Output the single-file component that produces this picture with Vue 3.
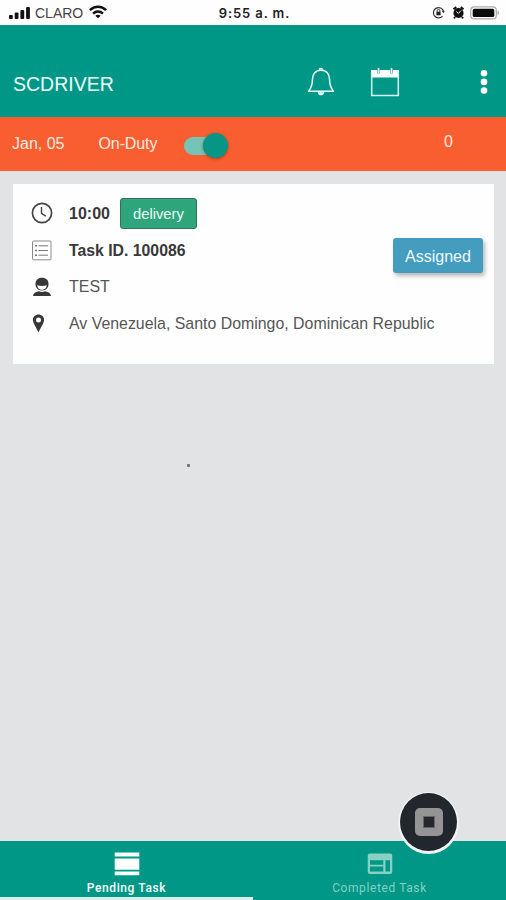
<script setup>
import { ref } from 'vue'

const onDuty = ref(true)
const activeTab = ref('pending')
const task = {
  time: '10:00',
  type: 'delivery',
  id: '100086',
  customer: 'TEST',
  address: 'Av Venezuela, Santo Domingo, Dominican Republic',
  status: 'Assigned',
}
</script>

<template>
  <div class="screen">
    <div class="status">
      <div class="carrier">
        <svg width="22" height="14" viewBox="0 0 22 14" fill="#111">
          <rect x="0" y="9" width="3.8" height="4" rx="1" />
          <rect x="5.7" y="6.5" width="3.8" height="6.5" rx="1" />
          <rect x="11.4" y="4" width="3.8" height="9" rx="1" />
          <rect x="17.1" y="1" width="3.8" height="12" rx="1" />
        </svg>
        <span class="carrier-name">CLARO</span>
        <svg class="wifi" width="18" height="14" viewBox="0 0 18 14" fill="none" stroke="#111" stroke-width="2.5">
          <path d="M.9 5.2C5.4.5 12.6.5 17.1 5.2" />
          <path d="M4.1 8.6c2.8-2.8 7-2.8 9.8 0" />
          <path d="M9 13.2 6.3 10.7c1.6-1.4 3.8-1.4 5.4 0z" fill="#111" stroke="none" />
        </svg>
      </div>
      <span class="clock">9:55 a. m.</span>
      <div class="indicators">
        <svg width="13" height="13" viewBox="0 0 13 13" fill="none" stroke="#333" stroke-width="1.2">
          <path d="M10.5 10.2A5.2 5.2 0 1 1 11.6 5.3" />
          <path d="M9.6 4.7h3.2l-1.3 2.5z" fill="#333" stroke="none" />
          <rect x="4.4" y="5.8" width="4.2" height="3.5" fill="#222" stroke="none" />
          <path d="M5.2 6V4.7a1.3 1.3 0 0 1 2.6 0V6" stroke-width="1" />
        </svg>
        <svg width="13" height="13" viewBox="0 0 13 13">
          <circle cx="6.5" cy="7" r="5.1" fill="#111" />
          <path d="m1.500 3.300 2.800-2.200M11.500 3.300 8.700 1.100M3 11l-1 1.400M10 11l1 1.400" stroke="#111" stroke-width="2" />
          <path d="M6.3 7.4 9 4.6M6.3 7.4 4.4 5.5" stroke="#fff" stroke-width="1" fill="none" />
        </svg>
        <svg width="30" height="14" viewBox="0 0 30 14">
          <rect x=".7" y=".9" width="25.6" height="12" rx="3.5" fill="none" stroke="#aaa" stroke-width="1.2" />
          <rect x="2.7" y="2.8" width="21.6" height="8.2" rx="1.6" fill="#0b0b0b" />
          <path d="M27.5 4.8c2 .7 2 3.5 0 4.2z" fill="#aaa" />
        </svg>
      </div>
    </div>

    <header class="toolbar">
      <h1>SCDRIVER</h1>
      <button class="bell" aria-label="Notifications">
        <svg width="28" height="30" viewBox="0 0 28 30" fill="none" stroke="#e8fffb" stroke-width="1.5" stroke-linejoin="round">
          <path d="M14 3.2c-5.5 0-8.5 4-8.5 9 0 6-1.2 8.5-3.9 12.1h24.8c-2.7-3.6-3.9-6.1-3.9-12.1 0-5-3-9-8.5-9z" />
          <path d="M12.4 3.2a1.6 1.6 0 0 1 3.2 0" />
          <path d="M10.8 25.2h6.400c0 4.200-6.400 4.200-6.400 0z" fill="#e8fffb" stroke="none" />
        </svg>
      </button>
      <button class="calendar" aria-label="Calendar">
        <svg width="30" height="30" viewBox="0 0 30 30">
          <path d="M1 3h28v7.500H1z" fill="#fff" />
          <path d="M1.700 4v24.400h26.600V4" fill="none" stroke="#dcfaf4" stroke-width="1.500" />
          <path d="M8.500 1v5.500M21.500 1v5.500" stroke="#48b3a7" stroke-width="2.600" />
          <path d="M8.500 1v5M21.500 1v5" stroke="#fff" stroke-width="1.200" />
        </svg>
      </button>
      <button class="more" aria-label="More">
        <svg width="8" height="26" viewBox="0 0 8 26" fill="#fff">
          <circle cx="4" cy="4.300" r="3.300" /><circle cx="4" cy="12.900" r="3.300" /><circle cx="4" cy="21.500" r="3.300" />
        </svg>
      </button>
    </header>

    <section class="duty">
      <span class="date">Jan, 05</span>
      <span class="duty-label">On-Duty</span>
      <button class="switch" :class="{ on: onDuty }" aria-label="On-Duty" @click="onDuty = !onDuty">
        <span class="knob"></span>
      </button>
      <span class="count">0</span>
    </section>

    <main class="content">
      <article class="card">
        <div class="details">
          <div class="line">
            <span class="icon">
              <svg width="22" height="22" viewBox="0 0 22 22" fill="none" stroke="#444">
                <circle cx="11" cy="11" r="9.600" stroke-width="1.700" />
                <path d="M10.500 5v6.400l4.300 2.700" stroke-width="1.400" />
              </svg>
            </span>
            <strong class="time">{{ task.time }}</strong>
            <span class="type">{{ task.type }}</span>
          </div>
          <div class="line">
            <span class="icon">
              <svg width="21" height="21" viewBox="0 0 21 21" fill="none" stroke="#8a8a8a">
                <rect x="1.500" y="1" width="18.500" height="18.800" rx="1" />
                <path d="M7.500 5.800h9.500M7.500 10.500h9.500M7.500 15.200h9.500" stroke="#777" />
                <path d="M4 5.800h2M4 10.500h2M4 15.200h2" stroke="#777" stroke-width="1.500" />
              </svg>
            </span>
            <strong class="task-id">Task ID. {{ task.id }}</strong>
          </div>
          <div class="line">
            <span class="icon">
              <svg width="21" height="20" viewBox="-1.500 0 21 20">
                <path d="M3 7.500C3 3 5.300.8 9.500.8S16 3 16 7.500c0 3-2.600 6-6.500 6S3 10.500 3 7.500z" fill="#383838" />
                <path d="M4.800 8.200q4.700 1.500 9.400 0c0 6-9.400 6-9.400 0z" fill="#fff" />
                <path d="M.5 19c.3-2.800 2.300-4 6-4.700 2 1 4 1 6 0 3.700.7 5.700 1.900 6 4.700z" fill="#383838" />
              </svg>
            </span>
            <span class="customer">{{ task.customer }}</span>
          </div>
          <div class="line">
            <span class="icon">
              <svg width="14" height="19" viewBox="-1.500 0 14 19">
                <path fill-rule="evenodd" d="M6 .5c3.300 0 5.600 2.400 5.600 5.500C11.600 9 8 13.800 6 18.500 4 13.800.4 9 .4 6 .4 2.900 2.700.5 6 .5zM6 3.500a2.500 2.500 0 1 0 0 5 2.500 2.500 0 0 0 0-5z" fill="#383838" />
              </svg>
            </span>
            <span class="address">{{ task.address }}</span>
          </div>
        </div>
        <span class="assigned">{{ task.status }}</span>
      </article>
      <i class="speck"></i>
    </main>

    <nav class="tabs">
      <button class="tab" :class="{ active: activeTab === 'pending' }" @click="activeTab = 'pending'">
        <svg width="26" height="24" viewBox="0 0 26 24" fill="currentColor">
          <path d="M.7.500h24.600v4H.7zM.7 6.500h24.600v11.200H.7zM.7 19.500h24.600v3.800H.7z" />
        </svg>
        <span class="pending-label">Pending Task</span>
      </button>
      <button class="tab" :class="{ active: activeTab === 'completed' }" @click="activeTab = 'completed'">
        <svg width="26" height="24" viewBox="0 0 26 24" fill="currentColor">
          <path fill-rule="evenodd" d="M2.700 1.500h20.600q2 0 2 2v16.600q0 2-2 2H2.700q-2 0-2-2V3.500q0-2 2-2zM3 8.200v4.500h13.300V8.200zM3 14.500v5h13.300v-5zM18.500 8.200v11.300H23V8.200z" />
        </svg>
        <span class="completed-label">Completed Task</span>
      </button>
    </nav>

    <button class="stop" aria-label="Stop">
      <span class="stop-frame"><span class="stop-core"></span></span>
    </button>
  </div>
</template>

<style>
body {
  margin: 0;
}
</style>

<style scoped>
.screen {
  position: relative;
  display: flex;
  flex-direction: column;
  width: 506px;
  height: 900px;
  overflow: hidden;
  background: #e2e3e5;
  font-family: "Liberation Sans", Arial, sans-serif;
  font-size: 16px;
}
button {
  border: 0;
  padding: 0;
  background: none;
  font: inherit;
  color: inherit;
}
svg {
  display: block;
  flex: none;
}
.status {
  display: grid;
  grid-template-columns: 1fr auto 1fr;
  align-items: center;
  height: 25px;
  padding: 0 6px 0 9px;
  background: #fefefe;
  color: #444;
}
.carrier,
.indicators {
  display: flex;
  align-items: center;
}
.carrier-name {
  margin-left: 4px;
  font-size: 14px;
  line-height: 16px;
}
.wifi {
  margin-left: 6px;
  margin-bottom: 1px;
}
.clock {
  font-family: Inter, sans-serif;
  font-size: 13px;
  font-weight: 600;
  letter-spacing: 0.9px;
  color: #222;
}
.indicators {
  justify-content: flex-end;
  gap: 7px;
}
.indicators svg:last-child {
  margin-left: -2px;
}
.toolbar {
  display: flex;
  align-items: center;
  height: 64px;
  padding: 25px 18px 3px 13px;
  background: #009787;
  color: #eefffb;
}
h1 {
  flex: 1;
  margin: 0;
  padding-top: 5px;
  font-size: 19.5px;
  font-weight: 400;
}
.calendar {
  margin-left: 35px;
}
.more {
  margin-left: 80px;
}
.duty {
  display: flex;
  align-items: center;
  height: 54px;
  box-sizing: border-box;
  padding: 0 53px 2px 12px;
  background: #f95e31;
  color: #ffeae0;
}
.date,
.duty-label {
  padding-top: 1px;
}
.duty-label {
  margin-left: 34px;
  letter-spacing: -0.1px;
}
.switch {
  display: flex;
  align-items: center;
  width: 44px;
  height: 18px;
  margin: 5px 0 0 27px;
  border-radius: 9px;
  background: #c9bcb5;
}
.switch.on {
  justify-content: flex-end;
  background: #75c4b5;
}
.knob {
  width: 25px;
  height: 25px;
  flex: none;
  border-radius: 50%;
  background: #079685;
  box-shadow: 0 1px 3px rgba(80, 30, 10, 0.5);
}
.count {
  margin-left: auto;
  padding-bottom: 2px;
}
.content {
  flex: 1;
  padding: 13px 12px 0 13px;
}
.card {
  display: flex;
  justify-content: space-between;
  height: 180px;
  box-sizing: border-box;
  padding: 11px 12px 0 18px;
  background: #fefefe;
}
.details {
  display: flex;
  flex-direction: column;
  flex: none;
  width: 362px;
}
.line {
  display: flex;
  align-items: center;
  height: 36.7px;
  white-space: nowrap;
  color: #555;
}
.icon {
  width: 38px;
  flex: none;
}
.line strong {
  padding-top: 2px;
  color: #383838;
}
.task-id {
  font-size: 15.8px;
}
.customer {
  padding-top: 1px;
}
.address {
  padding-top: 2px;
  font-size: 15.9px;
}
.type {
  height: 31px;
  box-sizing: border-box;
  margin-left: 10px;
  padding: 0 12px;
  border: 1px solid #34705a;
  border-radius: 3px;
  background: #2fa57b;
  color: #e8fff5;
  font-size: 14.8px;
  line-height: 31px;
}
.assigned {
  width: 90px;
  height: 35px;
  flex: none;
  margin: 43px 0 0;
  border-radius: 3px;
  background: #449cbe;
  box-shadow: 2px 3px 4px rgba(0, 0, 0, 0.28);
  color: #eefaff;
  line-height: 37px;
  text-align: center;
}
.speck {
  display: block;
  width: 3px;
  height: 3px;
  margin: 100px 0 0 174px;
  border-radius: 1px;
  background: #707174;
}
.tabs {
  display: flex;
  height: 59px;
  background: #009787;
}
.tab {
  display: flex;
  flex: 1;
  flex-direction: column;
  align-items: center;
  padding-top: 11px;
  box-sizing: border-box;
  border-bottom: 3px solid transparent;
  color: #86d0c4;
  font-family: Roboto, sans-serif;
  font-size: 12px;
  line-height: 14px;
}
.tab.active {
  color: #fafffe;
  border-color: #d9efeb;
}
.tab span {
  margin-top: 5px;
}
.pending-label {
  font-weight: 500;
  letter-spacing: 0.6px;
}
.completed-label {
  letter-spacing: 0.6px;
}
.stop {
  position: absolute;
  left: 400px;
  top: 793px;
  display: flex;
  align-items: center;
  justify-content: center;
  width: 57px;
  height: 58px;
  border-radius: 50%;
  background: #22262d;
  box-shadow: 0 1px 0 2px #f1f4f4;
}
.stop-frame {
  display: flex;
  align-items: center;
  justify-content: center;
  width: 28px;
  height: 28px;
  border-radius: 5px;
  background: #949494;
}
.stop-core {
  width: 10px;
  height: 10px;
  border: 1px solid #666;
  background: #25272b;
}
</style>
